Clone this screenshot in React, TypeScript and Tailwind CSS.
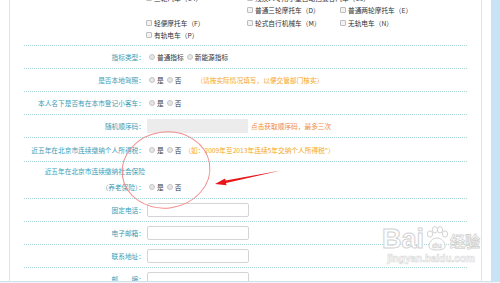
import type { ReactNode } from 'react';

// 驾照信息表单截图：左侧标签 + 单选/输入框，红圈与箭头为标注
const font = "font-['Noto_Sans_CJK_SC','Noto_Sans',sans-serif]";

function Check({ label }: { label: string }) {
  return (
    <span className="flex items-center whitespace-nowrap">
      <span className="w-[6px] h-[6px] border border-[#bdbdbd] bg-[#f3f3f3] rounded-[1px]" />
      <span className="ml-[2px]">{label}</span>
    </span>
  );
}

function Radio({ label }: { label: string }) {
  return (
    <span className="flex items-center whitespace-nowrap">
      <span className="w-[6px] h-[6px] rounded-full border border-[#c6c6c6] bg-[#e6e6e6]" />
      <span className="ml-[2px] mr-[3px]">{label}</span>
    </span>
  );
}

function Row({ label, h = 'h-[23px]', children }: { label: ReactNode; h?: string; children?: ReactNode }) {
  return (
    <div className={`flex items-center ${h} border-b border-dotted border-[#a9d6d9]`}>
      <div className="w-[121px] text-right text-[#3b9cb4] whitespace-nowrap">{label}</div>
      <div className="ml-[2px] flex items-center">{children}</div>
    </div>
  );
}

const Input = () => <div className="w-[102px] h-[14px] border border-[#d4d4d4] bg-white rounded-[2px]" />;

export default function App() {
  return (
    <div className={`relative w-[500px] h-[283px] overflow-hidden bg-white ${font} text-[6.7px] leading-[12px] text-[#333]`}>
      <div className="flex h-[281px]">
        <div className="w-[9px] bg-white" />
        <div className="w-[473px] border-x border-[#e3e3e3] px-[14px] overflow-hidden">
          {/* 准驾车型复选框 */}
          <div className="-mt-[8px] h-[54px] border-b border-dotted border-[#a9d6d9] pl-[122px]">
            <div className="grid grid-cols-[101px_93px_auto]">
              <div className="h-[12.3px] flex items-center"><Check label="三轮汽车（C4）" /></div>
              <div className="h-[12.3px] flex items-center"><Check label="残疾人专用小型自动挡载客汽车（C5）" /></div>
              <div />
              <div className="h-[12.3px]" />
              <div className="h-[12.3px] flex items-center"><Check label="普通三轮摩托车（D）" /></div>
              <div className="h-[12.3px] flex items-center"><Check label="普通两轮摩托车（E）" /></div>
              <div className="h-[12.3px] flex items-center"><Check label="轻便摩托车（F）" /></div>
              <div className="h-[12.3px] flex items-center"><Check label="轮式自行机械车（M）" /></div>
              <div className="h-[12.3px] flex items-center"><Check label="无轨电车（N）" /></div>
              <div className="h-[12.3px] flex items-center"><Check label="有轨电车（P）" /></div>
            </div>
          </div>

          <Row label="指标类型：">
            <span className="ml-[2px]" />
            <Radio label="普通指标" />
            <Radio label="新能源指标" />
          </Row>
          <Row label="是否本地驾照：">
            <span className="ml-[2px]" />
            <Radio label="是" />
            <Radio label="否" />
            <span className="ml-[12px] text-[#f6a623]">（请按实际情况填写，以便交管部门核实）</span>
          </Row>
          <Row label="本人名下是否有在本市登记小客车：">
            <span className="ml-[2px]" />
            <Radio label="是" />
            <Radio label="否" />
          </Row>
          <Row label="随机顺序码：">
            <div className="w-[101px] h-[14px] bg-[#ececec]" />
            <span className="ml-[3px] text-[#f08a3c]">点击获取顺序码，最多三次</span>
          </Row>
          <Row label="近五年在北京市连续缴纳个人所得税：" h="h-[24px]">
            <span className="ml-[2px]" />
            <Radio label="是" />
            <Radio label="否" />
            <span className="text-[#f6a623]">（如：2009年至2013年连续5年交纳个人所得税"）</span>
          </Row>
          <div className="flex items-end h-[37px] pb-[5.5px] border-b border-dotted border-[#a9d6d9]">
            <div className="w-[121px] text-right text-[#3b9cb4] whitespace-nowrap">
              <div>近五年在北京市连续缴纳社会保险</div>
              <div className="mt-[3.5px]">（养老保险）：</div>
            </div>
            <div className="ml-[4px] flex items-center h-[12px]">
              <Radio label="是" />
              <Radio label="否" />
            </div>
          </div>
          <Row label="固定电话："><Input /></Row>
          <Row label="电子邮箱："><Input /></Row>
          <Row label="联系地址："><Input /></Row>
          <Row label="邮　　编："><Input /></Row>
        </div>
        <div className="w-[9px] bg-white" />
        <div className="w-[9px] bg-[#c8e2f6]" />
      </div>
      <div className="h-[2px] border-t border-[#cfe2f1] bg-[#eef5fb]" />

      {/* 标注：红圈 + 箭头 */}
      <svg className="absolute left-0 top-0" width="500" height="283" viewBox="0 0 500 283">
        <ellipse cx="166" cy="170" rx="44" ry="38" fill="none" stroke="#f28c8c" strokeWidth="1" transform="rotate(-8 166 170)" />
        <polygon
          points="281,170.5 225.6,180.6 225.1,178.4 215,184 226.5,185.2 226,183"
          fill="#e8161b"
        />
      </svg>

      {/* 百度经验水印 */}
      <div className="absolute left-[382px] top-[226px] flex flex-col items-center">
        <div className="flex items-end">
          <span className="font-['Liberation_Sans',sans-serif] text-[27px] leading-[26px] font-bold text-white [-webkit-text-stroke:1px_#d2d2d2]">Bai</span>
          <svg width="24" height="26" viewBox="0 0 24 26" className="mx-[1px]">
            <g fill="#fff" stroke="#d2d2d2" strokeWidth="1">
              <ellipse cx="5" cy="8" rx="2.6" ry="3.2" />
              <ellipse cx="10" cy="3.8" rx="2.6" ry="3.2" />
              <ellipse cx="15" cy="3.8" rx="2.6" ry="3.2" />
              <ellipse cx="20" cy="8" rx="2.6" ry="3.2" />
              <path d="M4 21 C4 15 8 12 12 12 C16 12 20 15 20 21 C20 25 4 25 4 21 Z" />
            </g>
            <text x="12" y="22" textAnchor="middle" fontSize="8" fontWeight="bold" fill="#fff" stroke="#d2d2d2" strokeWidth="0.6" fontFamily="Liberation Sans, sans-serif">du</text>
          </svg>
          <span className="text-[15px] leading-[22px] font-bold text-white [-webkit-text-stroke:0.8px_#d2d2d2]">经验</span>
        </div>
        <span className="font-['Liberation_Sans',sans-serif] text-[10px] leading-[14px] font-bold text-white [-webkit-text-stroke:0.6px_#d8d8d8]">jingyan.baidu.com</span>
      </div>
    </div>
  );
}
